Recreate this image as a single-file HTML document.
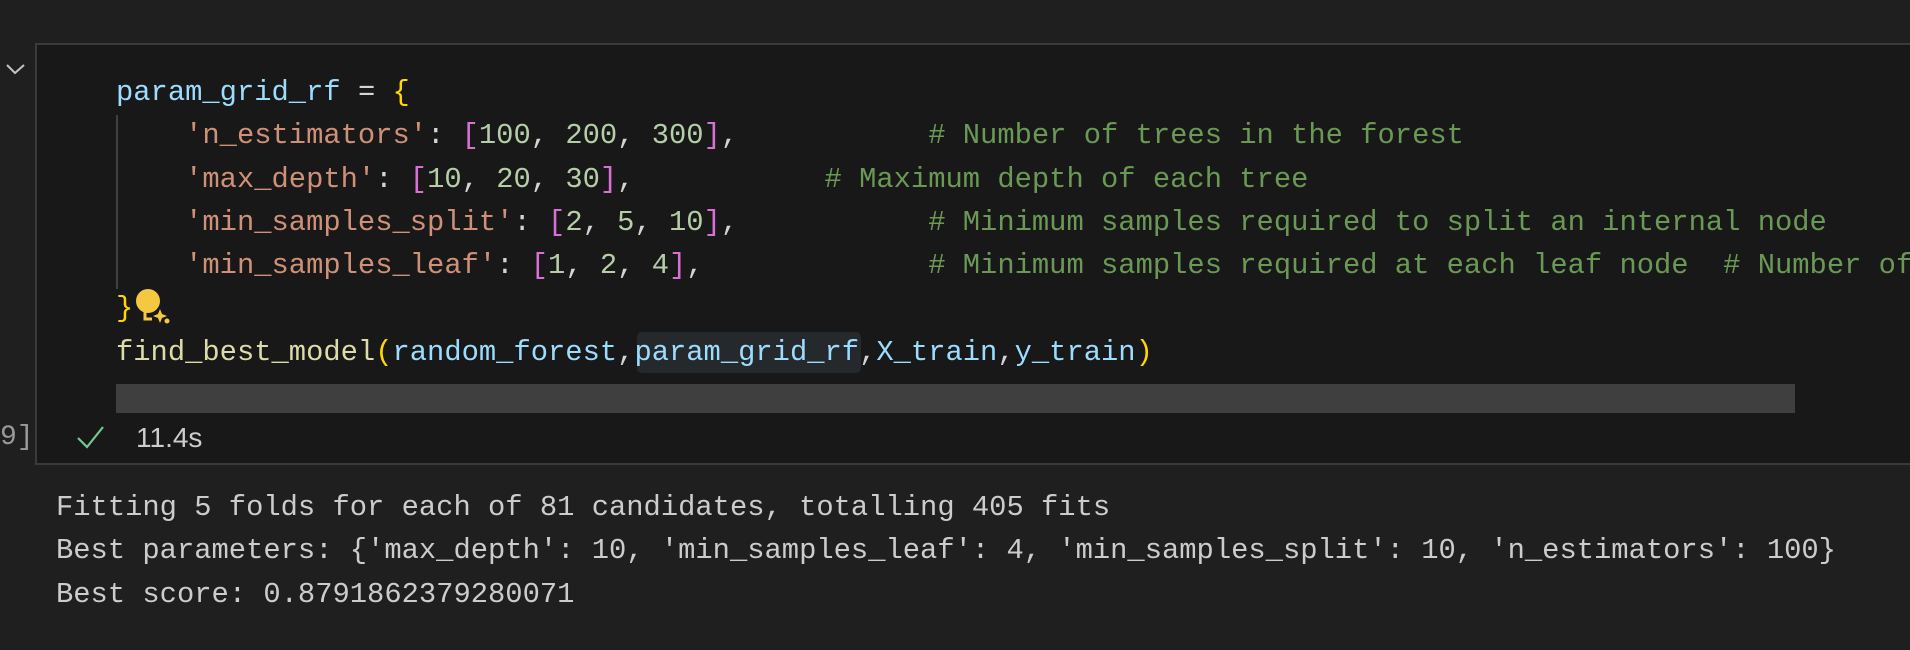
<!DOCTYPE html>
<html><head><meta charset="utf-8"><style>
*{margin:0;padding:0;box-sizing:border-box}
html,body{width:1910px;height:650px;overflow:hidden}
body{background:#1f1f1f;position:relative;font-family:"Liberation Mono",monospace;font-size:28.8px}
.cell{position:absolute;left:35px;top:43px;width:1875px;height:422px;background:#181818;border:2px solid #3a3a3d;border-right:none}
pre{font-family:"Liberation Mono",monospace;font-size:28.8px;line-height:43.3px;white-space:pre}
.clip{position:absolute;left:0;top:0;width:1910px;height:650px;overflow:hidden}
.code{position:absolute;left:116px;top:71px}
.v{color:#9cdcfe}.s{color:#ce9178}.b{color:#da70d6}.n{color:#b5cea8}.y{color:#ffd700}.c{color:#6a9955}.f{color:#dcdcaa}.w{color:#d4d4d4}
.out{position:absolute;left:56px;top:486px;color:#cccccc}
</style></head><body>
<svg style="position:absolute;left:0;top:0" width="40" height="90"><polyline points="7,65 15,73 24,65" fill="none" stroke="#c5c5c5" stroke-width="2"/></svg>
<div class="cell"></div>
<div style="position:absolute;left:116px;top:115px;width:2px;height:174px;background:#404040"></div>
<div style="position:absolute;left:637px;top:332px;width:224px;height:41px;background:#26292c;border-radius:5px"></div>
<div class="clip">
<pre class="code"><span class="v">param_grid_rf</span> <span class="w">=</span> <span class="y">{</span>
    <span class="s">'n_estimators'</span><span class="w">:</span> <span class="b">[</span><span class="n">100</span><span class="w">,</span> <span class="n">200</span><span class="w">,</span> <span class="n">300</span><span class="b">]</span><span class="w">,</span>           <span class="c"># Number of trees in the forest</span>
    <span class="s">'max_depth'</span><span class="w">:</span> <span class="b">[</span><span class="n">10</span><span class="w">,</span> <span class="n">20</span><span class="w">,</span> <span class="n">30</span><span class="b">]</span><span class="w">,</span>           <span class="c"># Maximum depth of each tree</span>
    <span class="s">'min_samples_split'</span><span class="w">:</span> <span class="b">[</span><span class="n">2</span><span class="w">,</span> <span class="n">5</span><span class="w">,</span> <span class="n">10</span><span class="b">]</span><span class="w">,</span>           <span class="c"># Minimum samples required to split an internal node</span>
    <span class="s">'min_samples_leaf'</span><span class="w">:</span> <span class="b">[</span><span class="n">1</span><span class="w">,</span> <span class="n">2</span><span class="w">,</span> <span class="n">4</span><span class="b">]</span><span class="w">,</span>             <span class="c"># Minimum samples required at each leaf node  # Number of</span>
<span class="y">}</span>
<span class="f">find_best_model</span><span class="y">(</span><span class="v">random_forest</span><span class="w">,</span><span class="v">param_grid_rf</span><span class="w">,</span><span class="v">X_train</span><span class="w">,</span><span class="v">y_train</span><span class="y">)</span></pre>
</div>
<svg style="position:absolute;left:130px;top:286px" width="45" height="42"><circle cx="18" cy="15" r="12" fill="#f5c842"/><path d="M15 24 V33 H22" fill="none" stroke="#f5c842" stroke-width="3"/><path d="M30 23 L32 28 L37 30 L32 32 L30 37 L28 32 L23 30 L28 28Z" fill="#f5c842"/><circle cx="37" cy="35" r="2.5" fill="#f5c842"/></svg>
<div style="position:absolute;left:116px;top:384px;width:1679px;height:29px;background:#3f3f3f"></div>
<div style="position:absolute;left:0;top:420px;color:#9a9a9a;font-size:28px;line-height:36px">9]</div>
<svg style="position:absolute;left:70px;top:420px" width="40" height="35"><polyline points="8,18 17,27 33,7" fill="none" stroke="#73c991" stroke-width="2.2"/></svg>
<div style="position:absolute;left:136px;top:420px;color:#cccccc;font-family:'Liberation Sans',sans-serif;font-size:28px;line-height:36px">11.4s</div>
<pre class="out">Fitting 5 folds for each of 81 candidates, totalling 405 fits
Best parameters: {'max_depth': 10, 'min_samples_leaf': 4, 'min_samples_split': 10, 'n_estimators': 100}
Best score: 0.8791862379280071</pre>
</body></html>
